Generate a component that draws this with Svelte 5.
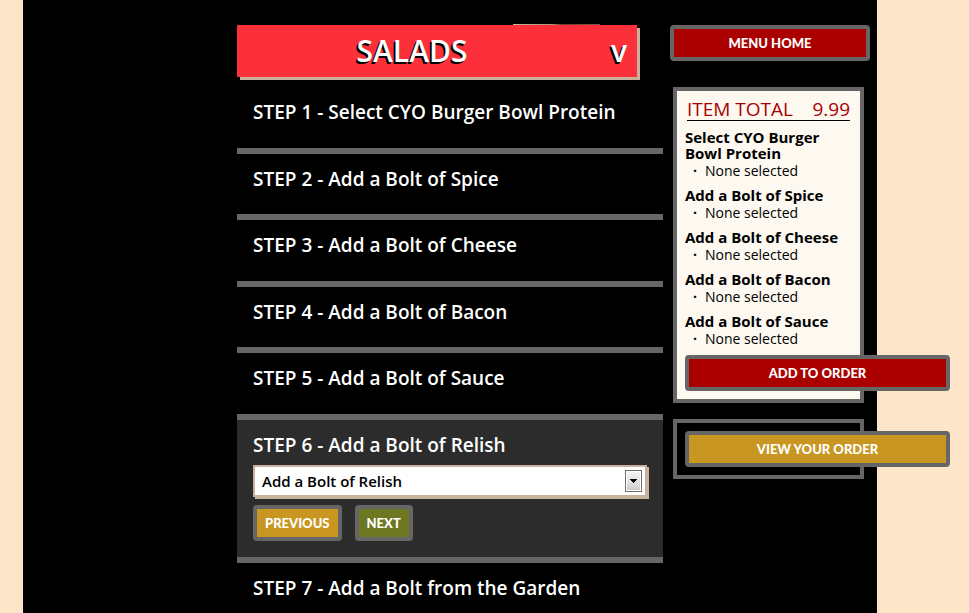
<script>
  const steps = [
    'Select CYO Burger Bowl Protein',
    'Add a Bolt of Spice',
    'Add a Bolt of Cheese',
    'Add a Bolt of Bacon',
    'Add a Bolt of Sauce',
    'Add a Bolt of Relish',
    'Add a Bolt from the Garden'
  ];
  const summary = steps.slice(0, 5);
  let current = $state(5);
  const previous = () => (current = Math.max(0, current - 1));
  const next = () => (current = Math.min(steps.length - 1, current + 1));
</script>

<div class="page">
  <main>
    <div class="photo"></div>
    <button class="category" type="button">
      <span class="name">SALADS</span>
      <span class="arrow">v</span>
    </button>
    <ol class="steps">
      {#each steps as step, i}
        <li class:active={i === current}>
          {#if i === current}
            <h2><label for="choice">STEP {i + 1} - {step}</label></h2>
            <div class="picker">
              <select id="choice">
                <option>{step}</option>
                <option>None</option>
              </select>
              <svg class="drop" viewBox="0 0 17 22" width="17" height="22" aria-hidden="true">
                <defs>
                  <linearGradient id="face" x1="0" y1="0" x2="0" y2="1">
                    <stop offset="0" stop-color="#f2f2f2" />
                    <stop offset="0.5" stop-color="#e4e4e4" />
                    <stop offset="1" stop-color="#cdcdcd" />
                  </linearGradient>
                </defs>
                <rect x="0.5" y="0.5" width="16" height="21" fill="#fff" stroke="#707070" />
                <rect x="2" y="2" width="13" height="18" fill="url(#face)" />
                <path d="M5 9h7v1h-1v1h-1v1h-1v1h-1v-1h-1v-1h-1v-1h-1z" fill="#000" />
              </svg>
            </div>
            <div class="moves">
              <button class="btn gold" type="button" onclick={previous}>PREVIOUS</button>
              <button class="btn green" type="button" onclick={next}>NEXT</button>
            </div>
          {:else}
            <h2>STEP {i + 1} - {step}</h2>
          {/if}
        </li>
      {/each}
    </ol>
  </main>

  <aside>
    <button class="btn red" type="button">MENU HOME</button>
    <section class="box total">
      <h3><span>ITEM TOTAL</span><span>9.99</span></h3>
      {#each summary as item}
        <h4>{item}</h4>
        <ul><li>None selected</li></ul>
      {/each}
      <button class="btn red wide" type="button">ADD TO ORDER</button>
    </section>
    <section class="box">
      <button class="btn gold wide" type="button">VIEW YOUR ORDER</button>
    </section>
  </aside>
</div>

<style>
  :global(body) {
    margin: 0;
    background: #fce5c9;
  }
  .page {
    display: flex;
    align-items: flex-start;
    gap: 7px;
    box-sizing: border-box;
    min-height: 100vh;
    margin: 0 92px 0 23px;
    padding: 24px 7px 0 214px;
    background: #000;
    color: #fff;
    font-family: "Open Sans", "Noto Sans", sans-serif;
  }
  main {
    flex: 1;
    min-width: 0;
  }
  .photo {
    width: 87px;
    height: 1px;
    margin-left: 276px;
    background: linear-gradient(90deg, #c8b49a, #a8957c 45%, #6b3a32 55%, #7d5a46);
  }
  .category {
    display: flex;
    align-items: center;
    width: calc(100% - 26px);
    height: 52px;
    padding: 0 10px 0 0;
    border: 0;
    background: #fc303b;
    box-shadow: 3px 3px 0 #c8b09a;
    color: #fff;
    font: 600 30px/52px "Open Sans", sans-serif;
    text-shadow: -2px 2px 0 #000;
  }
  .name {
    flex: 1;
    padding-right: 24px;
  }
  .steps {
    list-style: none;
    margin: 10px 0 0;
    padding: 0;
  }
  .steps > li {
    padding: 13px 16px 23px;
    border-bottom: 6px solid #666;
  }
  .steps > li:nth-child(odd) {
    padding-bottom: 24px;
  }
  .steps > li.active {
    padding-bottom: 16px;
    background: #2c2c2c;
  }
  .steps > li:last-child {
    padding-bottom: 13px;
    border-bottom: 0;
  }
  h2 {
    margin: 0;
    font-size: 19px;
    font-weight: 600;
    line-height: 24px;
  }
  .picker {
    display: grid;
    align-items: center;
    margin-top: 8px;
  }
  .picker > * {
    grid-area: 1 / 1;
  }
  .drop {
    justify-self: end;
    margin-right: 5px;
    pointer-events: none;
  }
  select {
    appearance: none;
    width: 100%;
    height: 32px;
    padding: 0 24px 0 7px;
    border: 2px solid #c8b0a0;
    border-radius: 0;
    background: #fff;
    box-shadow: 2px 2px 0 #c8b49a;
    color: #000;
    font: 600 15px "Open Sans", sans-serif;
  }
  .moves {
    display: flex;
    gap: 13px;
    margin-top: 8px;
  }
  .btn {
    height: 36px;
    padding: 0 8px;
    border: 4px solid #666;
    border-radius: 4px;
    color: #fff;
    font: 900 13px/28px Lato, sans-serif;
    white-space: nowrap;
  }
  .red {
    background: #a00;
  }
  .gold {
    background: #c89621;
  }
  .green {
    background: #6e7822;
  }
  aside {
    flex: none;
    display: flex;
    flex-direction: column;
    width: 200px;
    padding-top: 1px;
  }
  .box {
    margin: 16px 6px 0 3px;
    padding: 8px;
    border: 4px solid #666;
  }
  .total {
    margin-top: 26px;
    background: #fdf8f0;
    color: #000;
  }
  .wide {
    display: block;
    width: 265px;
  }
  h3 {
    display: flex;
    justify-content: space-between;
    margin: 0 2px 8px;
    border-bottom: 1px solid #000;
    color: #a00;
    font-size: 19px;
    font-weight: 400;
    line-height: 21px;
  }
  h4 {
    margin: 0;
    font-size: 15px;
    font-weight: 700;
    line-height: 16px;
  }
  ul {
    list-style: none;
    margin: 1px 0 8px;
    padding: 0 0 0 8px;
    font-size: 14px;
    line-height: 17px;
  }
  ul li::before {
    content: "·";
    display: inline-block;
    width: 12px;
    font-weight: 700;
  }
</style>
